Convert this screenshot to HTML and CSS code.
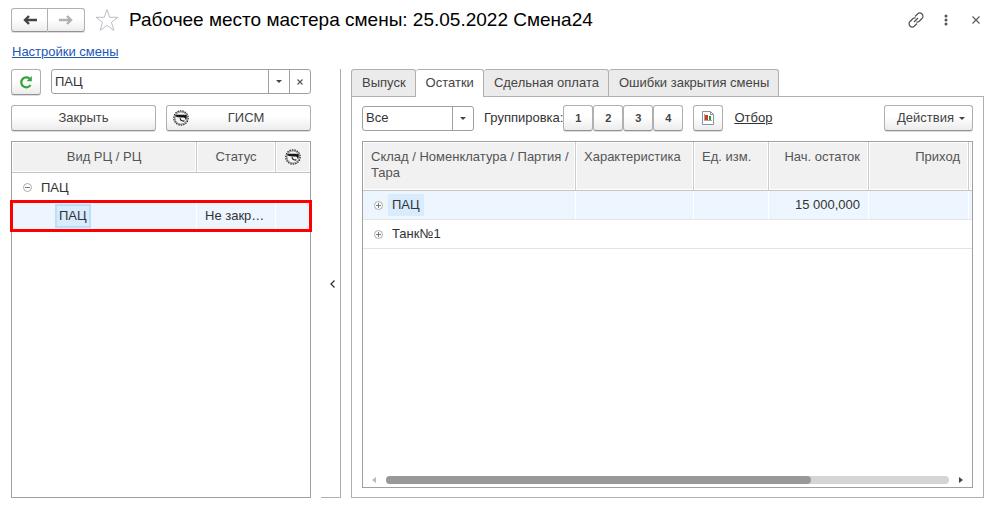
FILE: index.html
```html
<!DOCTYPE html>
<html lang="ru">
<head>
<meta charset="utf-8">
<title>Рабочее место мастера смены</title>
<link rel="stylesheet" href="styles.css">
</head>
<body>
<svg class="sprite" aria-hidden="true">
  <symbol id="badger" viewBox="0 0 16 16">
    <circle cx="8" cy="8" r="7.200" fill="#f4f4f4" stroke="#333" stroke-width="1.300" stroke-dasharray="1.500 1"/>
    <circle cx="8" cy="8" r="6.200" fill="none" stroke="#555" stroke-width=".8"/>
    <path d="M2.300 5.300C5 4.700 9 4.700 13.700 5.300L13.500 8.400 12.600 10 12 8 10.500 7.600 8 7.400 5 7.300 2.600 6.500Z" fill="#151515"/>
    <path d="M7 8.200L8 10.200 10.200 11.200 11.400 10.600" fill="none" stroke="#222" stroke-width="1.200"/>
  </symbol>
  <symbol id="plus" viewBox="0 0 9 9">
    <circle cx="4.500" cy="4.500" r="4" fill="#fff" stroke="#aaa"/>
    <path d="M2 4.500H7M4.500 2V7" stroke="#777"/>
  </symbol>
</svg>
<header class="titlebar">
  <div class="history">
    <button class="btn" aria-label="Назад"><svg width="14" height="10" viewBox="0 0 14 10"><path d="M6 1L2 5 6 9M2 5H14" fill="none" stroke="#444" stroke-width="2.400"/></svg></button>
    <button class="btn" aria-label="Вперед"><svg width="14" height="10" viewBox="0 0 14 10"><path d="M8 1L12 5 8 9M12 5H0" fill="none" stroke="#b0b0b0" stroke-width="2.400"/></svg></button>
  </div>
  <button class="bare" aria-label="В избранное"><svg width="24" height="24" viewBox="0 0 24 24"><path d="M12 1.500L14.700 9.300H23L16.400 14.300 18.900 22.300 12 17.400 5.100 22.300 7.600 14.300 1 9.300H9.300Z" fill="#fff" stroke="#b9bfc5"/></svg></button>
  <h1>Рабочее место мастера смены: 25.05.2022 Смена24</h1>
  <div class="window-tools">
    <button class="bare" aria-label="Ссылка"><svg width="16" height="16" viewBox="0 0 16 16" fill="none" stroke="#555" stroke-width="1.300"><path d="M7 4.500L9.500 2A3 3 0 0 1 14 6.500L11 9.500A3 3 0 0 1 8.500 10M9 11.500L6.500 14A3 3 0 0 1 2 9.500L5 6.500A3 3 0 0 1 7.500 6M6 10L10 6"/></svg></button>
    <button class="bare" aria-label="Меню"><svg width="4" height="12" viewBox="0 0 4 12" fill="#555"><circle cx="2" cy="2" r="1.500"/><circle cx="2" cy="6" r="1.500"/><circle cx="2" cy="10" r="1.500"/></svg></button>
    <button class="bare" aria-label="Закрыть окно"><svg width="8" height="8" viewBox="0 0 8 8"><path d="M.5 .5L7.500 7.500M7.500 .5L.5 7.500" stroke="#555" stroke-width="1.100"/></svg></button>
  </div>
</header>
<nav class="links"><a href="#settings">Настройки смены</a></nav>
<main class="workspace">
  <section class="side">
    <div class="row">
      <button class="btn square" aria-label="Обновить"><svg width="14" height="14" viewBox="0 0 14 14"><path d="M11.500 10A5 5 0 1 1 10.500 3.500" fill="none" stroke="#35a336" stroke-width="2.200"/><path d="M12.800 1V6.200H7.600Z" fill="#35a336"/></svg></button>
      <div class="combo grow">
        <input type="text" value="ПАЦ" aria-label="Рабочий центр">
        <button aria-label="Выбрать"><i class="caret"></i></button>
        <button aria-label="Очистить"><svg width="6" height="6" viewBox="0 0 6 6"><path d="M.5 .5L5.500 5.500M5.500 .5L.5 5.500" stroke="#555" stroke-width="1.100"/></svg></button>
      </div>
    </div>
    <div class="row split">
      <button class="btn">Закрыть</button>
      <button class="btn with-icon"><svg width="16" height="16"><use href="#badger"/></svg><span>ГИСМ</span></button>
    </div>
    <div class="grid">
      <table class="centers">
        <colgroup><col class="c-name"><col class="c-status"><col></colgroup>
        <thead><tr><th>Вид РЦ / РЦ</th><th>Статус</th><th aria-label="ГИСМ"><svg width="16" height="16"><use href="#badger"/></svg></th></tr></thead>
        <tbody>
          <tr><td colspan="3"><div class="node"><svg width="9" height="9" viewBox="0 0 9 9"><circle cx="4.500" cy="4.500" r="4" fill="#fff" stroke="#aaa"/><path d="M2 4.500H7" stroke="#777"/></svg><span>ПАЦ</span></div></td></tr>
          <tr class="current marked"><td><div class="node child"><span class="picked framed">ПАЦ</span></div></td><td>Не закр…</td><td></td></tr>
        </tbody>
      </table>
    </div>
  </section>
  <button class="splitter" aria-label="Свернуть панель"><svg width="5" height="8" viewBox="0 0 5 8"><path d="M4.500 .5L1 4 4.500 7.500" fill="none" stroke="#333" stroke-width="1.300"/></svg></button>
  <section class="content">
    <div class="tabs" role="tablist">
      <button role="tab">Выпуск</button>
      <button role="tab" aria-selected="true">Остатки</button>
      <button role="tab">Сдельная оплата</button>
      <button role="tab">Ошибки закрытия смены</button>
    </div>
    <div class="panel">
      <div class="toolbar">
        <div class="combo filter">
          <select aria-label="Показать"><option>Все</option></select>
          <span class="drop"><i class="caret"></i></span>
        </div>
        <span class="caption">Группировка:</span>
        <div class="levels"><button class="btn">1</button><button class="btn">2</button><button class="btn">3</button><button class="btn">4</button></div>
        <button class="btn square report" aria-label="Отчет"><svg width="14" height="16" viewBox="0 0 14 16"><path d="M1.500 1.500H9.500L12.500 4.500V14.500H1.500Z" fill="#fff" stroke="#8495a8"/><path d="M9.500 1.500V4.500H12.500" fill="none" stroke="#8495a8"/><path d="M3.500 4V10.500H11" fill="none" stroke="#9aa7b5"/><path d="M4 5H7V10H4Z" fill="#e8341c"/><path d="M8 6H10V10H8Z" fill="#269b35"/></svg></button>
        <a class="pick" href="#filter">Отбор</a>
        <button class="btn actions">Действия<i class="caret"></i></button>
      </div>
      <div class="grid">
        <table class="stock">
          <colgroup><col class="c-item"><col class="c-prop"><col class="c-unit"><col class="c-sum"><col class="c-sum"><col></colgroup>
          <thead><tr><th>Склад / Номенклатура / Партия / Тара</th><th>Характеристика</th><th>Ед. изм.</th><th class="num">Нач. остаток</th><th class="num">Приход</th><th></th></tr></thead>
          <tbody>
            <tr class="current"><td><div class="node"><svg width="9" height="9"><use href="#plus"/></svg><span class="picked">ПАЦ</span></div></td><td></td><td></td><td class="num">15 000,000</td><td></td><td></td></tr>
            <tr><td><div class="node"><svg width="9" height="9"><use href="#plus"/></svg><span>Танк№1</span></div></td><td></td><td></td><td></td><td></td><td></td></tr>
          </tbody>
        </table>
        <div class="scroll"><i class="arrow left"></i><div class="track"><div class="thumb"></div></div><i class="arrow right"></i></div>
      </div>
    </div>
  </section>
</main>
</body>
</html>
```

FILE: styles.css
```css
* { box-sizing: border-box; }
body {
  margin: 0;
  padding: 8px 13px 9px 11px;
  height: 100vh;
  display: flex;
  flex-direction: column;
  background: #fff;
  color: #333;
  font: 13px/16px "Liberation Sans", Arial, sans-serif;
}
button, input, select { font: inherit; color: inherit; margin: 0; }
svg { display: block; flex: none; }
.sprite { position: absolute; width: 0; height: 0; }

.btn {
  display: flex;
  align-items: center;
  justify-content: center;
  height: 26px;
  padding: 0;
  color: #444;
  background: linear-gradient(#fff 45%, #ececec);
  border: 1px solid #b0b0b0;
  border-bottom-color: #929292;
  border-radius: 3px;
  box-shadow: 0 1px 0 #ddd;
}
.bare { padding: 0; border: 0; background: none; }
.square { width: 30px; }

.titlebar { display: flex; align-items: center; height: 24px; }
.history { display: flex; margin-right: 10px; }
.history .btn { width: 37px; height: 24px; }
.history .btn:first-child { border-radius: 3px 0 0 3px; }
.history .btn:last-child { border-left: 0; border-radius: 0 3px 3px 0; }
h1 { margin: 0 0 0 10px; font-size: 19px; line-height: 24px; font-weight: 400; color: #000; white-space: nowrap; }
.window-tools { display: flex; align-items: center; gap: 14px; margin-left: auto; }
.window-tools .bare { display: flex; justify-content: center; width: 16px; }

.links { margin: 12px 1px 9px; }
.links a { color: #1e56b5; }

.workspace { flex: 1; min-height: 0; display: flex; }
.side { flex: 0 0 300px; display: flex; flex-direction: column; }
.row { display: flex; gap: 10px; margin-bottom: 10px; }
.split .btn { flex: 1; }
.with-icon { position: relative; }
.with-icon span { padding-left: 15px; }
.with-icon svg { position: absolute; left: 6px; }
.grow { flex: 1; }

.combo { display: flex; height: 25px; border: 1px solid #a0a0a0; border-radius: 3px; background: #fff; }
.combo input, .combo select { flex: 1; min-width: 0; padding: 0 3px; border: 0; background: none; appearance: none; outline: 0; }
.combo button, .drop { display: flex; align-items: center; justify-content: center; width: 21px; padding: 0; border: 0; border-left: 1px solid #a0a0a0; background: none; }
.caret { border: 3px solid transparent; border-top-color: #444; border-bottom: 0; }

.grid { flex: 1; min-height: 0; display: flex; flex-direction: column; overflow: hidden; border: 1px solid #a0a0a0; }
.side .grid { overflow: visible; }
table { width: 100%; table-layout: fixed; border-collapse: separate; border-spacing: 0; }
th { padding: 7px 8px; font-weight: 400; color: #555; background: #f1f1f1; border-right: 1px solid #ccc; border-bottom: 1px solid #c4c4c4; box-shadow: inset 0 0 0 1px #fff; }
th:last-child { border-right: 0; }
td { height: 29px; padding: 0 8px; white-space: nowrap; border-bottom: 1px solid #e4e4e4; }
.current td { background: #edf6ff; border-right: 1px solid #fff; }
.current td:last-child { border-right: 0; }
.centers th { height: 31px; padding: 0 8px; text-align: center; }
.centers th svg { margin: 0 auto; }
.centers td { border-bottom: 0; }
.centers .marked td { height: 28px; }
.c-name { width: 185px; }
.c-status { width: 79px; }
.marked { outline: 3px solid #f00; outline-offset: -1px; }
.node { display: flex; align-items: center; gap: 5px; padding-left: 3px; }
.node span { padding: 3px 4px; }
.node.child { padding-left: 35px; }
.picked { background: #d9ecfd; }
.node .framed { padding: 2px; border: 2px solid #bcdef9; }

.splitter {
  width: 30px;
  padding: 0 0 0 19px;
  border: 0;
  border-right: 1px solid #b0b0b0;
  background: linear-gradient(#b0b0b0, #b0b0b0) right bottom / 19px 1px no-repeat;
}

.content { flex: 1; min-width: 0; margin-left: 10px; display: flex; flex-direction: column; }
.tabs { display: flex; }
.tabs button { height: 27px; padding: 0 9px 0 10px; color: #444; background: #ebebeb; border: 1px solid #b0b0b0; border-left-width: 0; border-bottom: 0; border-radius: 3px 3px 0 0; }
.tabs button:first-child { border-left-width: 1px; }
.tabs [aria-selected] { height: 28px; padding-bottom: 1px; margin-bottom: -1px; background: #fff; position: relative; }
.panel { flex: 1; min-height: 0; display: flex; flex-direction: column; padding: 8px 10px 9px; border: 1px solid #b0b0b0; }
.toolbar { display: flex; align-items: center; margin-bottom: 10px; }
.filter { width: 112px; }
.caption { margin-left: 10px; }
.levels { display: flex; }
.levels .btn { width: 30px; font-size: 11px; font-weight: 700; }
.report { margin: 0 11px 0 10px; }
.pick { color: #333; }
.actions { width: 89px; margin-left: auto; padding-left: 5px; gap: 5px; }
.stock th { height: 49px; text-align: left; vertical-align: top; }
.stock th:first-child { padding-right: 4px; }
.stock .num { text-align: right; }
.c-item { width: 213px; }
.c-prop { width: 118px; }
.c-unit { width: 75px; }
.c-sum { width: 100px; }

.scroll { display: flex; align-items: center; gap: 10px; margin: auto 9px 3px; }
.track { flex: 1; height: 8px; border-radius: 4px; background: #d5d5d5; }
.thumb { width: 75.500%; height: 8px; border-radius: 4px; background: #999; }
.arrow { border: 3px solid transparent; }
.left { border-left: 0; border-right: 4px solid #bbb; }
.right { border-right: 0; border-left: 4px solid #444; }
```
